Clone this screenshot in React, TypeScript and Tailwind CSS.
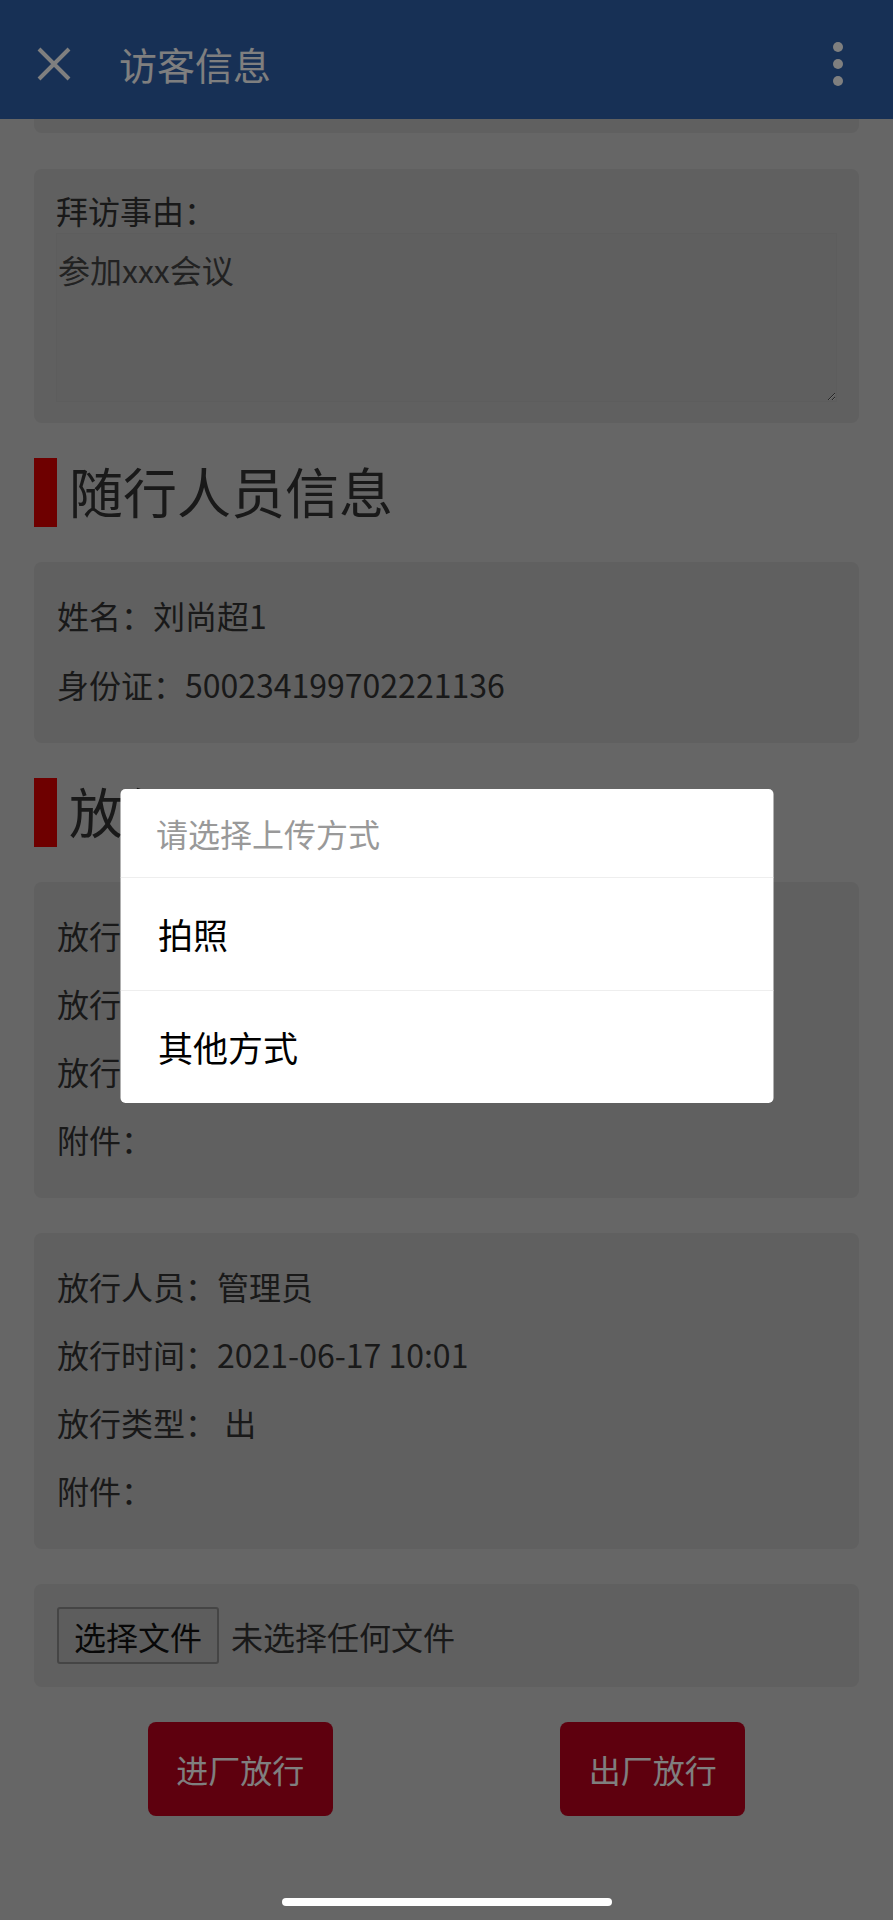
import React from 'react';

const card = 'mx-[34px] rounded-lg bg-[#c0c0c0]';

function InfoLine({ text }: { text: string }) {
  return <p className="text-[32px] leading-[68px] text-[#333] whitespace-pre">{text}</p>;
}

function SectionTitle({ title }: { title: string }) {
  return (
    <div className="mx-[34px] flex h-[69px] items-stretch">
      <div className="w-[23px] bg-[#dc0000]" />
      <h2 className="pl-[12px] text-[54px] leading-[66px] text-[#333]">{title}</h2>
    </div>
  );
}

function ReleaseCard({ rows }: { rows: string[] }) {
  return (
    <div className={`${card} px-[23px] pt-[19px] pb-[25px]`}>
      {rows.map((row, index) => (
        <InfoLine key={`${row}--${index}`} text={row} />
      ))}
    </div>
  );
}

export default function App() {
  return (
    <div className="relative min-h-[1920px] w-full overflow-hidden bg-[#cccccc] font-['Noto_Sans_CJK_SC','Noto_Sans',sans-serif]">
      <header className="flex h-[119px] items-center bg-[#2e60aa] pt-[9px] pr-[50px] pl-[37px]">
        <svg width="34" height="34" viewBox="0 0 34 34" className="shrink-0">
          <path d="M2 2 L32 32 M32 2 L2 32" stroke="#ffffff" strokeWidth="4" strokeLinecap="butt" />
        </svg>
        <span className="ml-[48px] text-[38px] leading-none text-white">访客信息</span>
        <div className="ml-auto flex flex-col gap-[7px]">
          <span className="h-[10px] w-[10px] rounded-full bg-white" />
          <span className="h-[10px] w-[10px] rounded-full bg-white" />
          <span className="h-[10px] w-[10px] rounded-full bg-white" />
        </div>
      </header>

      <div className="mx-[34px] h-[14px] rounded-b-lg bg-[#c0c0c0]" />

      <div className="flex flex-col gap-[35px] pt-[36px]">
        <div className={`${card} px-[22px] pt-[18px] pb-[21px]`}>
          <p className="text-[32px] leading-[46px] text-[#333]">拜访事由：</p>
          <textarea
            readOnly
            defaultValue="参加xxx会议"
            className="block h-[169px] w-full resize border border-[#bababa] bg-[#bebebe] px-[1px] pt-[16px] text-[32px] leading-[38px] text-[#454545] outline-none"
          />
        </div>

        <SectionTitle title="随行人员信息" />

        <div className={`${card} px-[23px] pt-[19px] pb-[24px]`}>
          <p className="text-[32px] leading-[69px] text-[#333]">姓名：刘尚超1</p>
          <p className="text-[32px] leading-[69px] text-[#333]">身份证：500234199702221136</p>
        </div>

        <SectionTitle title="放行记录" />

        <ReleaseCard rows={['放行人员：管理员', '放行时间：2021-06-17 09:58', '放行类型： 进', '附件：']} />
        <ReleaseCard rows={['放行人员：管理员', '放行时间：2021-06-17 10:01', '放行类型： 出', '附件：']} />

        <div className={`${card} flex items-center px-[23px] py-[23px]`}>
          <span className="flex h-[57px] w-[162px] items-center justify-center rounded-[3px] border-2 border-[#8a8a8a] bg-[#bababa] text-[32px] text-[#111]">
            选择文件
          </span>
          <span className="ml-[12px] text-[32px] text-[#333]">未选择任何文件</span>
        </div>

        <div className="mx-[34px] flex justify-around">
          <button className="h-[94px] w-[185px] rounded-lg bg-[#bc001c] text-[32px] text-white">进厂放行</button>
          <button className="h-[94px] w-[185px] rounded-lg bg-[#bc001c] text-[32px] text-white">出厂放行</button>
        </div>
      </div>

      {/* dimmed backdrop + upload picker */}
      <div className="absolute inset-0 bg-black/50" />
      <div className="absolute top-[789px] left-1/2 w-[653px] -translate-x-1/2 overflow-hidden rounded-[5px] bg-white">
        <div className="flex h-[89px] items-center border-b border-[#eeeeee] pl-[36px] text-[32px] text-[#999]">
          请选择上传方式
        </div>
        <div className="flex h-[113px] items-center border-b border-[#eeeeee] pl-[38px] text-[35px] text-black">拍照</div>
        <div className="flex h-[112px] items-center pl-[38px] text-[35px] text-black">其他方式</div>
      </div>

      <div className="absolute bottom-[14px] left-1/2 h-[8px] w-[330px] -translate-x-1/2 rounded-full bg-white" />
    </div>
  );
}
